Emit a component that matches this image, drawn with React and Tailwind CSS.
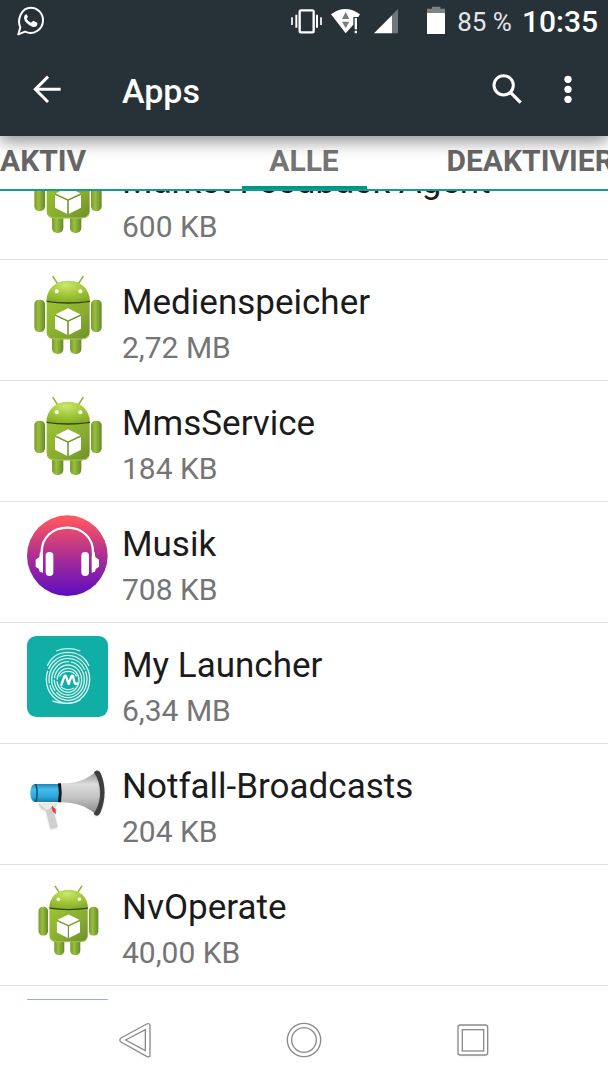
import React from "react";

function AndroidIcon({ className }) {
  return (
    <svg viewBox="21 22 243 243" className={className} aria-hidden="true">
      <defs>
        <linearGradient id="body" x1="0" y1="0" x2="1" y2="1">
          <stop offset="0" stopColor="#9bc431" />
          <stop offset="0.6" stopColor="#87ab30" />
          <stop offset="1" stopColor="#6c8f28" />
        </linearGradient>
        <linearGradient id="limb" x1="0" y1="0" x2="1" y2="0">
          <stop offset="0" stopColor="#7a9a30" />
          <stop offset="0.4" stopColor="#98bf3c" />
          <stop offset="1" stopColor="#67882a" />
        </linearGradient>
        <radialGradient id="head" cx="0.45" cy="0.2" r="0.8">
          <stop offset="0" stopColor="#cbe672" />
          <stop offset="0.5" stopColor="#a4cb39" />
          <stop offset="1" stopColor="#85ac28" />
        </radialGradient>
      </defs>
      <path d="M99 33l13 20M189 33l-13 20" stroke="#8fb53a" strokeWidth="5" strokeLinecap="round" />
      <rect x="96" y="205" width="34" height="60" rx="15" fill="url(#limb)" />
      <rect x="150" y="205" width="34" height="60" rx="15" fill="url(#limb)" />
      <rect x="43" y="102" width="32" height="97" rx="14" fill="url(#limb)" />
      <rect x="213" y="102" width="32" height="97" rx="14" fill="url(#limb)" />
      <path d="M80 109h129v90q0 22-22 22h-85q-22 0-22-22z" fill="url(#body)" />
      <path d="M84 209q6 11 22 11h78q16 0 22-11" fill="none" stroke="#a9cc55" strokeWidth="3" />
      <path d="M79 106C81 67 107 45 144 45s64 22 66 61q-66 11-131 0z" fill="url(#head)" />
      <path d="M80 107q64 10 130 0" fill="none" stroke="#32440e" strokeWidth="4" />
      <circle cx="110" cy="77" r="6" fill="#fff" />
      <circle cx="181" cy="77" r="6" fill="#fff" />
      <path d="M144 128l37 18-37 18-37-18z" fill="#fff" />
      <path d="M105 149l37 18v41l-37-19zM183 149l-37 18v41l37-19z" fill="#fff" />
      <path d="M105 149l39 18 39-18M144 167v41" fill="none" stroke="#718d36" strokeWidth="3" />
    </svg>
  );
}

function MusicIcon({ className }) {
  return (
    <svg viewBox="21 30 243 243" className={className} aria-hidden="true">
      <defs>
        <linearGradient id="music" x1="0" y1="0" x2="0" y2="1">
          <stop offset="0.04" stopColor="#ff565f" />
          <stop offset="0.5" stopColor="#ac2f92" />
          <stop offset="1" stopColor="#5d0cc2" />
        </linearGradient>
      </defs>
      <circle cx="142" cy="152" r="121" fill="url(#music)" />
      <path d="M65 160v-18C65 96 99 68 142 68s77 28 77 74v18" fill="none" stroke="#fff" strokeWidth="7" />
      <path d="M69 155v48l-10-3-2-8-10-7v-21l11-8 2-16zM215 155v48l10-3 2-8 10-7v-21l-11-8-2-16z" fill="#fff" />
      <rect x="77" y="141" width="23" height="72" rx="11" fill="#fff" />
      <rect x="184" y="141" width="23" height="72" rx="11" fill="#fff" />
    </svg>
  );
}

function LauncherIcon({ className }) {
  return (
    <svg viewBox="21 18 243 243" className={className} aria-hidden="true">
      <rect x="21" y="18" width="243" height="243" rx="28" fill="#10aea5" />
      <g fill="none" stroke="#d5f2ec" strokeWidth="4">
        <path d="M108 63q36-14 73 0" />
        <path d="M82 108C94 80 118 67 144 67s51 13 63 41" />
        <path d="M97 213q46 16 84-3" />
        <ellipse cx="144" cy="148" rx="65" ry="72" strokeDasharray="240 6" />
        <ellipse cx="144" cy="148" rx="57" ry="63" strokeDasharray="170 5" />
        <ellipse cx="144" cy="149" rx="49" ry="54" strokeDasharray="120 5" />
        <ellipse cx="144" cy="150" rx="41" ry="45" strokeDasharray="135 5" />
        <ellipse cx="144" cy="151" rx="33" ry="36" strokeDasharray="105 5" />
        <path d="M119 139c5-10 14-15 26-15 12 0 20 6 25 15M122 170c9 10 27 12 40 4" />
      </g>
      <path
        d="M124 165l9-26q3-4 5 0l8 23 8-23q3-4 5 0l5 20q3 6 8 1"
        fill="none"
        stroke="#fff"
        strokeWidth="7"
        strokeLinecap="round"
        strokeLinejoin="round"
      />
    </svg>
  );
}

function MegaphoneIcon({ className }) {
  return (
    <svg viewBox="21 6 243 243" className={className} aria-hidden="true">
      <defs>
        <linearGradient id="horn" x1="0" y1="0" x2="0" y2="1">
          <stop offset="0" stopColor="#8f8f8f" />
          <stop offset="0.3" stopColor="#dcdcdc" />
          <stop offset="0.6" stopColor="#c4c4c4" />
          <stop offset="1" stopColor="#858585" />
        </linearGradient>
        <linearGradient id="barrel" x1="0" y1="0" x2="0" y2="1">
          <stop offset="0" stopColor="#2587b5" />
          <stop offset="0.3" stopColor="#43bdea" />
          <stop offset="0.7" stopColor="#2aa7dc" />
          <stop offset="1" stopColor="#1c7eaa" />
        </linearGradient>
      </defs>
      <path
        d="M54 145h60l-15 16 14 53q-3 7-22 7l-14-55-12-4z"
        fill="#cfcfcf"
        className="drop-shadow-md"
      />
      <path d="M56 145h60l-17 10-20 10z" fill="#eaeaea" />
      <path d="M97 152q2 6 10 10l1 16-9-8-5-12z" fill="#ee3d3a" />
      <path d="M43 87h76v54H43q-12-5-12-27t12-27z" fill="url(#barrel)" />
      <path d="M45 87q8 27 0 54h5q7-27 0-54z" fill="#17506b" />
      <path d="M123 85c42 1 78-10 106-37q24 67 0 132c-28-27-64-38-106-38z" fill="url(#horn)" />
      <path d="M114 85h9q4 28 0 57h-9q5-28 0-57z" fill="#151515" />
      <path
        d="M222 52c7-8 16-7 21 5 15 36 14 78-1 114-5 13-14 14-21 5 25-35 26-88 1-124z"
        fill="#3e3e3e"
        className="drop-shadow-md"
      />
    </svg>
  );
}

function BlueIcon({ className }) {
  return <div className={`bg-[#8fb0ee] ${className}`} />;
}

const apps = [
  { name: "Market Feedback Agent", size: "600 KB", Icon: AndroidIcon },
  { name: "Medienspeicher", size: "2,72 MB", Icon: AndroidIcon },
  { name: "MmsService", size: "184 KB", Icon: AndroidIcon },
  { name: "Musik", size: "708 KB", Icon: MusicIcon },
  { name: "My Launcher", size: "6,34 MB", Icon: LauncherIcon },
  { name: "Notfall-Broadcasts", size: "204 KB", Icon: MegaphoneIcon },
  { name: "NvOperate", size: "40,00 KB", Icon: AndroidIcon, small: true },
  { name: "", size: "", Icon: BlueIcon },
];

function StatusBar() {
  return (
    <div className="flex h-11 items-center pl-[17px] pr-[10px]">
      <svg viewBox="51 18 81 96" className="h-8 w-[27px]" fill="none" aria-label="WhatsApp">
        <path
          d="M55 103l6-21C50 58 65 23 92 23c21 0 37 17 37 38 0 28-29 46-54 34z"
          stroke="#fff"
          strokeWidth="6"
          strokeLinejoin="round"
        />
        <path
          d="M78 43q-7 3-6 12 3 16 25 25 12 3 15-6v-6l-12-6-7 6q-9-4-13-12l4-6-5-8z"
          fill="#fff"
        />
      </svg>

      <div className="ml-auto flex items-center">
        {/* Vibration */}
        <svg viewBox="33 18 93 96" className="h-8 w-[31px]" fill="none" stroke="#fff">
          <rect x="59" y="31" width="42" height="66" rx="4" strokeWidth="7" />
          <path d="M49 44v39M111 44v39" strokeWidth="6" />
          <path d="M36 52v23M123 52v23" strokeWidth="5" />
        </svg>
        {/* Wifi */}
        <svg viewBox="153 18 87 96" className="ml-[9px] h-8 w-[29px]">
          <path d="M153 43q43-32 87 0l-5 8h-15v23l-23 26z" fill="#fff" />
          <path d="M197 36l11 21h-22zM186 65h22l-11 20z" fill="#7b7f81" />
          <path d="M224 54h7v34h-7zM224 92h7v8h-7z" fill="#fff" />
        </svg>
        {/* Signal */}
        <svg viewBox="282 18 72 96" className="ml-[14px] h-8 w-6">
          <path d="M336 45v55h18V27z" fill="#70777a" />
          <path d="M282 100l54-54v54z" fill="#fff" />
        </svg>
        {/* Battery */}
        <svg viewBox="441 18 54 96" className="ml-[29px] h-8 w-[18px]">
          <path d="M456 20h25v6h14v14h-54V26h15z" fill="#7d8386" />
          <path d="M441 39h54v63h-54z" fill="#fff" />
        </svg>
        <span className="ml-3 text-[26px] leading-8 text-[#e4e6e7]">85 %</span>
        <span className="ml-[10px] text-[30px] font-medium leading-8 text-white">10:35</span>
      </div>
    </div>
  );
}

function AppBar() {
  return (
    <div className="flex h-[92px] items-center pb-[2px] pl-[33px] pr-[33px]">
      <button aria-label="Zurück" className="w-[89px]">
        <svg viewBox="100 222 84 90" className="h-[30px] w-7" fill="none" stroke="#fff" strokeWidth="9">
          <path d="M145 230l-38 38 38 38M106 268h77" />
        </svg>
      </button>
      <h1 className="pt-1 text-[34px] font-medium leading-10 text-white">Apps</h1>
      <button aria-label="Suchen" className="ml-auto">
        <svg viewBox="632 222 90 90" className="size-[30px]" fill="none" stroke="#fff">
          <circle cx="667" cy="256" r="29" strokeWidth="9" />
          <path d="M688 278l30 30" strokeWidth="10" />
        </svg>
      </button>
      <button aria-label="Weitere Optionen" className="ml-[39px]">
        <svg viewBox="841 222 42 90" className="h-[30px] w-[14px]" fill="#fff">
          <circle cx="862" cy="238" r="11" />
          <circle cx="862" cy="268" r="11" />
          <circle cx="862" cy="298" r="11" />
        </svg>
      </button>
    </div>
  );
}

function Tabs() {
  return (
    <nav className="grid h-[55px] shrink-0 grid-cols-[minmax(0,1fr)_125px_minmax(0,1fr)] border-b-2 border-[#179b8c] text-[30px] font-bold leading-[48px] text-[#666]">
      <button className="overflow-hidden whitespace-nowrap border-b-3 border-transparent text-left">
        AKTIV
      </button>
      <button className="border-b-3 border-[#009688] text-[#757575]">ALLE</button>
      <button className="overflow-hidden whitespace-nowrap border-b-3 border-transparent pl-20 text-left">
        DEAKTIVIERT
      </button>
    </nav>
  );
}

function AppRow({ name, size, Icon, small }) {
  return (
    <li className="flex h-[121px] gap-[14px] border-b border-[#e0e0e0] pl-[27px] pt-[13px]">
      <div className="flex size-[81px] shrink-0 items-center justify-center">
        <Icon className={small ? "size-[72px]" : "size-[81px]"} />
      </div>
      <div className="pt-2">
        <p className="text-[35px] leading-[44px] text-[#1b1b1b]">{name}</p>
        <p className="text-[30px] leading-[46px] text-[#757575]">{size}</p>
      </div>
    </li>
  );
}

function NavBar() {
  return (
    <footer className="flex h-20 shrink-0 items-center justify-center gap-[133px] bg-white">
      <button aria-label="Zurück">
        <svg viewBox="49 64 108 108" className="size-9 drop-shadow-xs" fill="#fff" stroke="#8c8c8c" strokeWidth="4">
          <path d="M61 112l77-42q10-4 10 5v88q0 8-10 4l-77-43q-7-6 0-12z" />
          <path d="M75 118l59-31v63z" />
        </svg>
      </button>
      <button aria-label="Startseite">
        <svg viewBox="558 64 108 108" className="size-9 drop-shadow-xs" fill="#fff" stroke="#8c8c8c" strokeWidth="4">
          <circle cx="612" cy="118" r="50" />
          <circle cx="612" cy="118" r="37" />
        </svg>
      </button>
      <button aria-label="Übersicht">
        <svg viewBox="1065 64 108 108" className="size-9 drop-shadow-xs" fill="#fff" stroke="#8c8c8c" strokeWidth="4">
          <rect x="1074" y="73" width="89" height="90" rx="7" />
          <rect x="1087" y="87" width="64" height="64" />
        </svg>
      </button>
    </footer>
  );
}

export default function App() {
  return (
    <div className="flex h-screen flex-col overflow-hidden bg-white font-[Roboto,sans-serif]">
      {/* Header */}
      <header className="relative z-10 shrink-0 bg-[#273238] shadow-[0_5px_16px_rgba(0,0,0,0.45)]">
        <StatusBar />
        <AppBar />
      </header>

      <Tabs />

      {/* App list, scrolled so the first row is partly hidden */}
      <main className="min-h-0 flex-1 overflow-hidden">
        <ul className="-mt-[52px]">
          {apps.map((app) => (
            <AppRow key={app.name} {...app} />
          ))}
        </ul>
      </main>

      <NavBar />
    </div>
  );
}
